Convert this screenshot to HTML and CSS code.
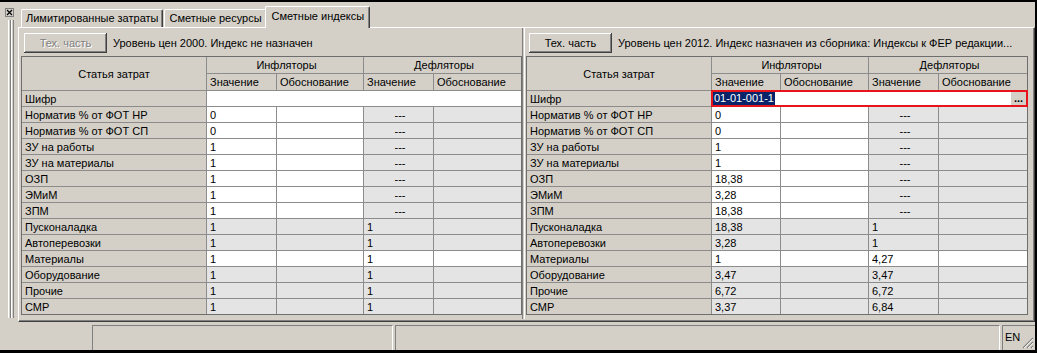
FILE: index.html
```html
<!DOCTYPE html>
<html lang="ru">

<head>
    <meta charset="UTF-8">
    <title>Сметные индексы</title>
    <link rel="stylesheet" href="styles.css">
</head>

<body>
    <div class="window">
        <div class="main">
            <div class="dock">
                <div class="close-box">
                    <svg width="9" height="9" viewBox="0 0 9 9">
                        <rect x="0.5" y="0.5" width="8" height="8" fill="#d4d0c8" stroke="#808080" />
                        <path d="M2 2 L7 7 M7 2 L2 7" stroke="#000" stroke-width="1.2" />
                    </svg>
                </div>
                <div class="grip"></div>
            </div>
            <div class="tabs-area">
                <div class="tab-strip">
                    <div class="tab">Лимитированные затраты</div>
                    <div class="tab">Сметные ресурсы</div>
                    <div class="tab active">Сметные индексы</div>
                </div>
                <div class="tab-page">
                    <div class="panel left">
                        <div class="toolbar">
                            <button class="btn" disabled>Тех. часть</button>
                            <span class="level">Уровень цен 2000. Индекс не назначен</span>
                        </div>
                        <div class="grid grid-left">
                            <div class="hd name">Статья затрат</div>
                            <div class="hd group">Инфляторы</div>
                            <div class="hd group">Дефляторы</div>
                            <div class="hd">Значение</div>
                            <div class="hd">Обоснование</div>
                            <div class="hd">Значение</div>
                            <div class="hd">Обоснование</div>

                            <div class="lbl">Шифр</div>
                            <div class="w wide"></div>

                            <div class="lbl">Норматив % от ФОТ НР</div>
                            <div class="w">0</div><div class="w"></div><div class="g c">---</div><div class="g"></div>
                            <div class="lbl">Норматив % от ФОТ СП</div>
                            <div class="w">0</div><div class="w"></div><div class="g c">---</div><div class="g"></div>
                            <div class="lbl">ЗУ на работы</div>
                            <div class="w">1</div><div class="w"></div><div class="g c">---</div><div class="g"></div>
                            <div class="lbl">ЗУ на материалы</div>
                            <div class="w">1</div><div class="w"></div><div class="g c">---</div><div class="g"></div>
                            <div class="lbl">ОЗП</div>
                            <div class="w">1</div><div class="w"></div><div class="g c">---</div><div class="g"></div>
                            <div class="lbl">ЭМиМ</div>
                            <div class="w">1</div><div class="w"></div><div class="g c">---</div><div class="g"></div>
                            <div class="lbl">ЗПМ</div>
                            <div class="w">1</div><div class="w"></div><div class="g c">---</div><div class="g"></div>
                            <div class="lbl">Пусконаладка</div>
                            <div class="g">1</div><div class="g"></div><div class="g">1</div><div class="g"></div>
                            <div class="lbl">Автоперевозки</div>
                            <div class="g">1</div><div class="g"></div><div class="g">1</div><div class="g"></div>
                            <div class="lbl">Материалы</div>
                            <div class="w">1</div><div class="w"></div><div class="w">1</div><div class="w"></div>
                            <div class="lbl">Оборудование</div>
                            <div class="g">1</div><div class="g"></div><div class="g">1</div><div class="g"></div>
                            <div class="lbl">Прочие</div>
                            <div class="g">1</div><div class="g"></div><div class="g">1</div><div class="g"></div>
                            <div class="lbl">СМР</div>
                            <div class="g">1</div><div class="g"></div><div class="g">1</div><div class="g"></div>
                        </div>
                    </div>
                    <div class="splitter"></div>
                    <div class="panel right">
                        <div class="toolbar">
                            <button class="btn">Тех. часть</button>
                            <span class="level">Уровень цен 2012. Индекс назначен из сборника: Индексы к ФЕР редакции...</span>
                        </div>
                        <div class="grid grid-right">
                            <div class="hd name">Статья затрат</div>
                            <div class="hd group">Инфляторы</div>
                            <div class="hd group">Дефляторы</div>
                            <div class="hd">Значение</div>
                            <div class="hd">Обоснование</div>
                            <div class="hd">Значение</div>
                            <div class="hd">Обоснование</div>

                            <div class="lbl">Шифр</div>
                            <div class="w wide editing">
                                <span class="selected">01-01-001-1</span>
                                <span class="ellipsis">...</span>
                            </div>

                            <div class="lbl">Норматив % от ФОТ НР</div>
                            <div class="w">0</div><div class="w"></div><div class="g c">---</div><div class="g"></div>
                            <div class="lbl">Норматив % от ФОТ СП</div>
                            <div class="w">0</div><div class="w"></div><div class="g c">---</div><div class="g"></div>
                            <div class="lbl">ЗУ на работы</div>
                            <div class="w">1</div><div class="w"></div><div class="g c">---</div><div class="g"></div>
                            <div class="lbl">ЗУ на материалы</div>
                            <div class="w">1</div><div class="w"></div><div class="g c">---</div><div class="g"></div>
                            <div class="lbl">ОЗП</div>
                            <div class="w">18,38</div><div class="w"></div><div class="g c">---</div><div class="g"></div>
                            <div class="lbl">ЭМиМ</div>
                            <div class="w">3,28</div><div class="w"></div><div class="g c">---</div><div class="g"></div>
                            <div class="lbl">ЗПМ</div>
                            <div class="w">18,38</div><div class="w"></div><div class="g c">---</div><div class="g"></div>
                            <div class="lbl">Пусконаладка</div>
                            <div class="g">18,38</div><div class="g"></div><div class="g">1</div><div class="g"></div>
                            <div class="lbl">Автоперевозки</div>
                            <div class="g">3,28</div><div class="g"></div><div class="g">1</div><div class="g"></div>
                            <div class="lbl">Материалы</div>
                            <div class="w">1</div><div class="w"></div><div class="w">4,27</div><div class="w"></div>
                            <div class="lbl">Оборудование</div>
                            <div class="g">3,47</div><div class="g"></div><div class="g">3,47</div><div class="g"></div>
                            <div class="lbl">Прочие</div>
                            <div class="g">6,72</div><div class="g"></div><div class="g">6,72</div><div class="g"></div>
                            <div class="lbl">СМР</div>
                            <div class="g">3,37</div><div class="g"></div><div class="g">6,84</div><div class="g"></div>
                        </div>
                    </div>
                </div>
            </div>
        </div>
        <div class="statusbar">
            <div class="sb-panel sb-first"></div>
            <div class="sb-panel sb-second"></div>
            <div class="sb-panel sb-lang">EN</div>
            <svg class="size-grip" width="12" height="12" viewBox="0 0 12 12">
                <path d="M11 1 L1 11 M11 5 L5 11 M11 9 L9 11" stroke="#808080" stroke-width="1.2" />
                <path d="M11 2 L2 11 M11 6 L6 11 M11 10 L10 11" stroke="#ffffff" stroke-width="0.8" />
            </svg>
        </div>
    </div>
</body>

</html>
```

FILE: styles.css
```css
* {
    box-sizing: border-box;
}

body {
    margin: 0;
    background: #d4d0c8;
    font-family: "Liberation Sans", Arial, sans-serif;
    font-size: 11px;
    color: #000;
}

.window {
    width: 1037px;
    height: 353px;
    border-top: 2px solid #000;
    border-right: 2px solid #000;
    border-bottom: 3px solid #000;
    display: flex;
    flex-direction: column;
}

.main {
    height: 320px;
    display: flex;
}

/* dock strip on the left */
.dock {
    width: 17px;
    display: flex;
    flex-direction: column;
    align-items: flex-start;
}

.close-box {
    margin: 6px 0 0 5px;
    height: 9px;
}

.close-box svg {
    display: block;
}

.grip {
    margin: 3px 0 0 8px;
    width: 6px;
    height: 298px;
    border-left: 1px solid #fff;
    border-right: 1px solid #808080;
    background: linear-gradient(90deg, transparent 1px, #808080 1px, #808080 2px, #fff 2px, #fff 3px, transparent 3px);
}

/* tabs */
.tabs-area {
    flex: 1;
    display: flex;
    flex-direction: column;
}

.tab-strip {
    height: 25px;
    display: flex;
    align-items: flex-end;
    padding-left: 4px;
}

.tab {
    height: 18px;
    padding: 2px 4px 0 4px;
    border-top: 1px solid #fff;
    border-left: 1px solid #fff;
    border-right: 1px solid #404040;
    box-shadow: inset -1px 0 #808080;
    border-radius: 2px 2px 0 0;
    white-space: nowrap;
}

.tab + .tab {
    margin-left: 1px;
}

.tab.active {
    height: 22px;
    margin: 0 0 -1px -2px;
    padding: 3px 5px 0 6px;
    background: #d4d0c8;
    position: relative;
    z-index: 1;
}

.tab-page {
    flex: 1;
    margin-left: 1px;
    border-top: 1px solid #fff;
    border-left: 1px solid #fff;
    border-right: 1px solid #404040;
    border-bottom: 1px solid #404040;
    box-shadow: inset -1px -1px #808080;
    padding: 0 2px 2px 1px;
    display: flex;
}

.panel {
    padding-left: 1px;
    display: flex;
    flex-direction: column;
}

.panel.left {
    width: 502px;
}

.panel.right {
    flex: 1;
}

.splitter {
    width: 3px;
    border-left: 1px solid #808080;
    border-right: 1px solid #fff;
}

.toolbar {
    height: 28px;
    display: flex;
    align-items: center;
    padding: 1px 0 0 3px;
    white-space: nowrap;
    overflow: hidden;
}

.btn {
    width: 83px;
    height: 20px;
    margin-right: 6px;
    padding: 0;
    font: inherit;
    color: #000;
    background: #d4d0c8;
    border: none;
    box-shadow: inset -1px -1px #404040, inset 1px 1px #fff, inset -2px -2px #808080;
}

.btn:disabled {
    color: #808080;
    text-shadow: 1px 1px #fff;
}

/* grids */
.grid {
    display: grid;
    gap: 1px;
    background: #8c8c8c;
    border: 1px solid #6e6e6e;
    grid-template-rows: 16px 16px repeat(14, 15px);
    line-height: 15px;
    white-space: nowrap;
}

.grid-left {
    width: 501px;
    grid-template-columns: 184px 69px 86px 69px 87px;
}

.grid-right {
    width: 502px;
    grid-template-columns: 184px 68px 87px 69px 88px;
}

.grid > div {
    padding: 1px 0 0 3px;
    overflow: hidden;
}

.hd {
    background: #d4d0c8;
}

.grid > .hd.name {
    grid-row: span 2;
    display: flex;
    align-items: center;
    justify-content: center;
    padding: 2px 0 0 0;
}

.hd.group {
    grid-column: span 2;
    text-align: center;
}

.lbl {
    background: #d4d0c8;
}

.w {
    background: #fff;
}

.g {
    background: #e4e4e4;
}

.c {
    text-align: center;
}

.wide {
    grid-column: span 4;
}

.grid > .editing {
    display: flex;
    justify-content: space-between;
    align-items: center;
    padding: 0 1px 0 1px;
    outline: 2px solid #e8141c;
    outline-offset: -1px;
}

.selected {
    background: #0a246a;
    color: #fff;
    padding: 0 1px;
    line-height: 13px;
}

.ellipsis {
    width: 15px;
    height: 13px;
    line-height: 13px;
    text-align: center;
    font-weight: bold;
    background: #d4d0c8;
}

/* status bar */
.statusbar {
    flex: 1;
    display: flex;
    padding: 3px 0 0 92px;
    position: relative;
}

.sb-panel {
    border-top: 1px solid #808080;
    border-left: 1px solid #808080;
    border-right: 1px solid #fff;
    margin-right: 2px;
}

.sb-first {
    width: 301px;
}

.sb-second {
    width: 605px;
}

.sb-lang {
    flex: 1;
    margin-right: 0;
    border-right: none;
    padding: 5px 0 0 2px;
}

.size-grip {
    position: absolute;
    right: 1px;
    bottom: 1px;
}
```
